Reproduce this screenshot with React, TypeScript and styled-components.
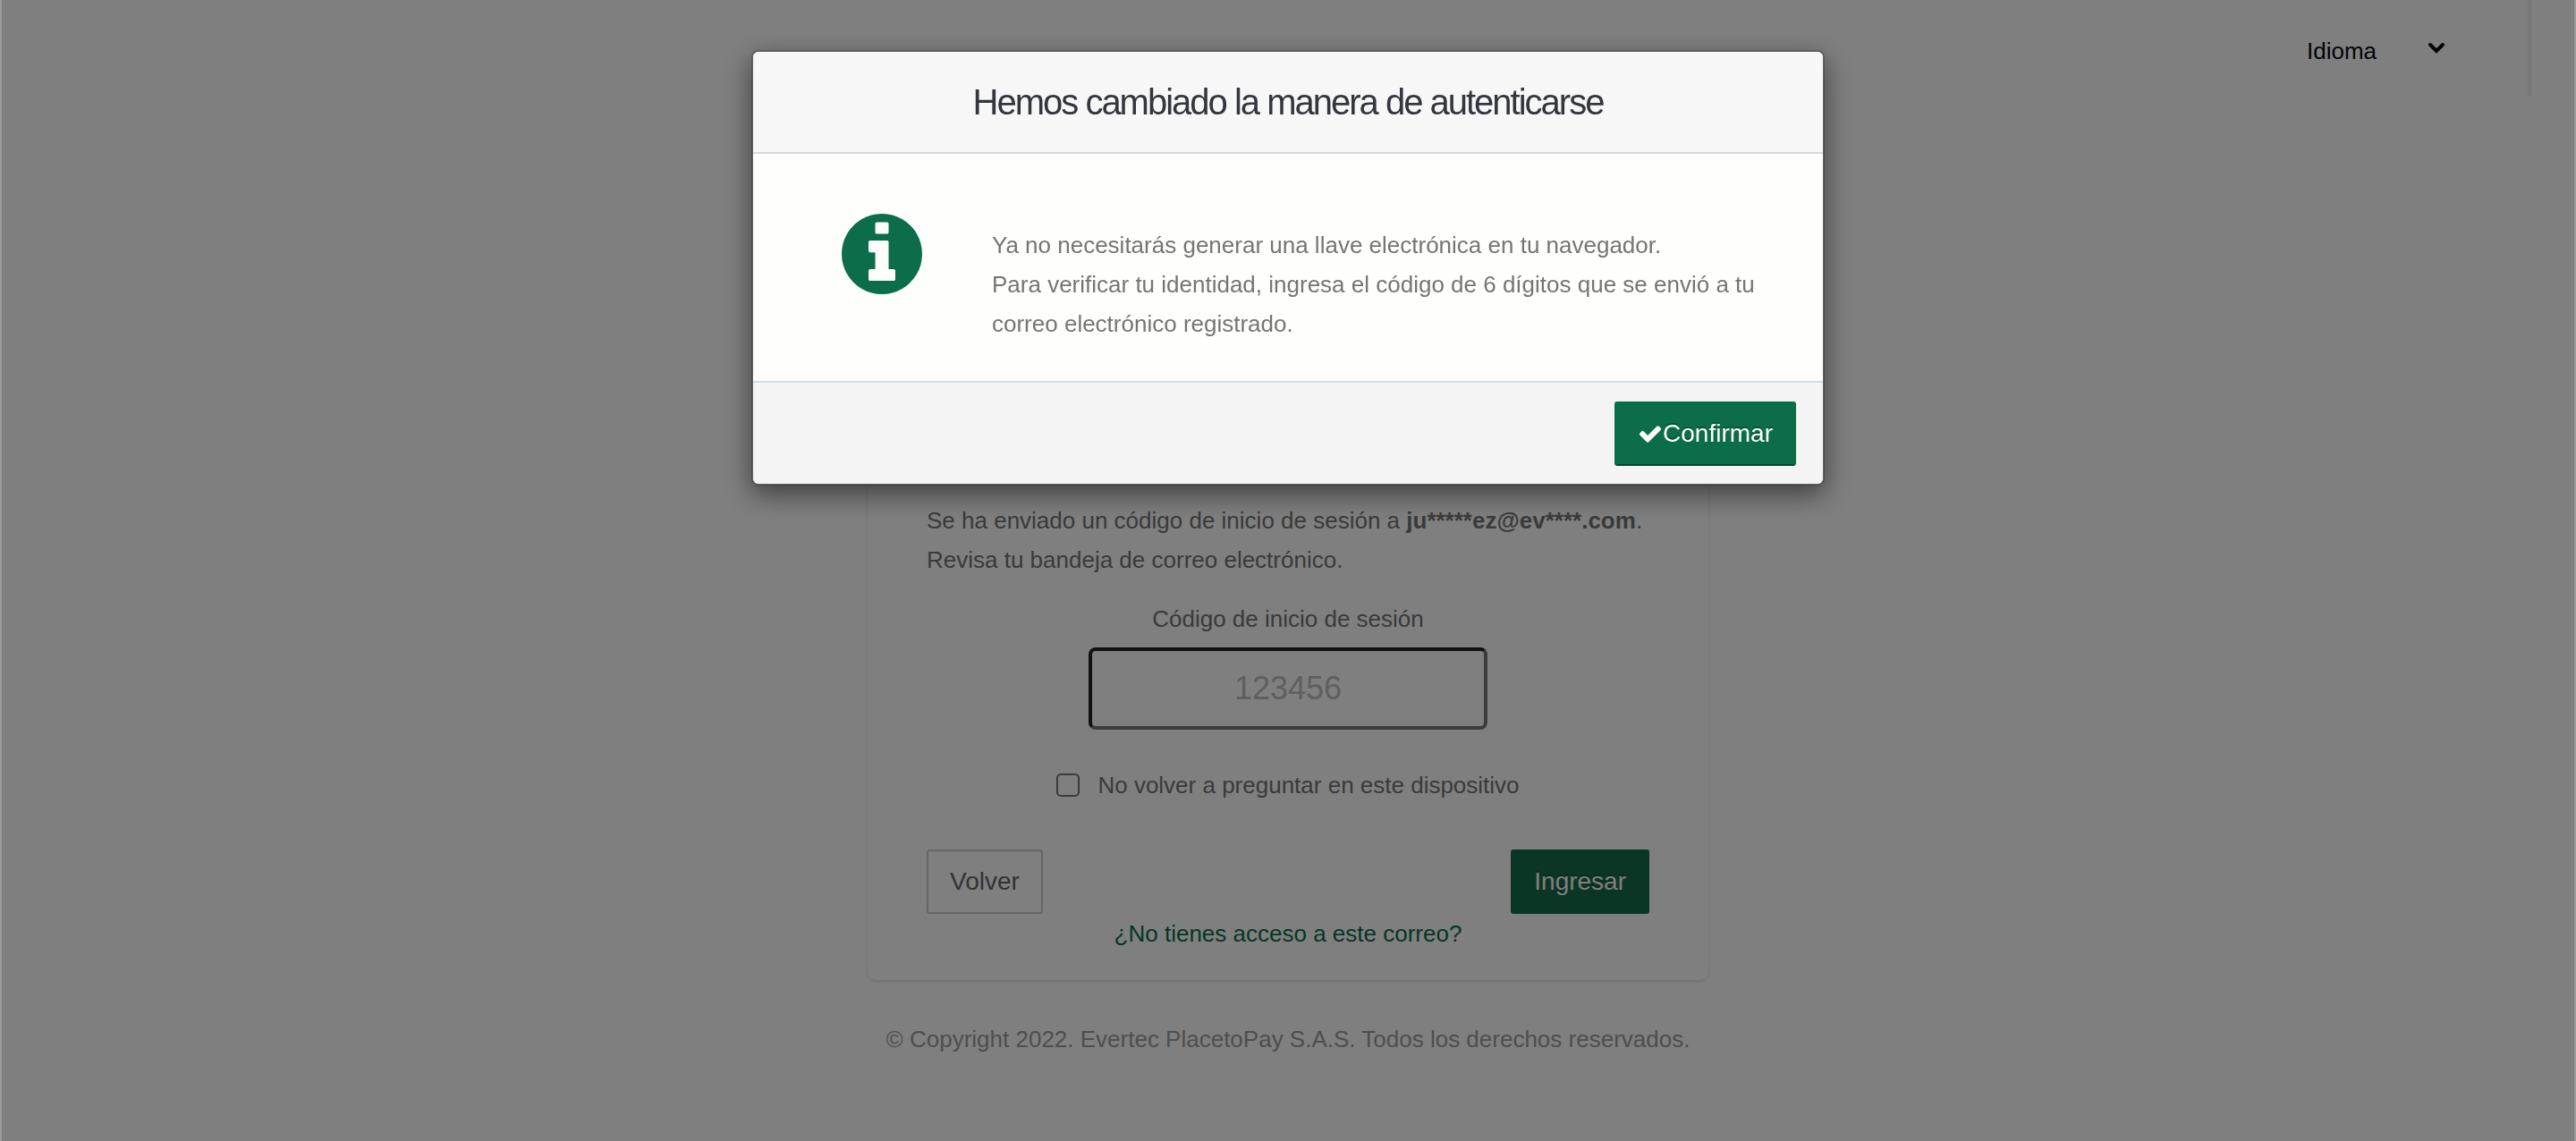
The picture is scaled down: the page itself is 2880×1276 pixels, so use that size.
import React from "react";
import styled, { createGlobalStyle } from "styled-components";

const green = "#0c6d49";
const softGreen = "#166c4b";
const ink = "#757575";

const GlobalStyle = createGlobalStyle`
  *, *::before, *::after { box-sizing: border-box; }
  body {
    margin: 0;
    background: #fff;
    color: ${ink};
    font: 26px/44px "Liberation Sans", Arial, Helvetica, sans-serif;
  }
  p, h1 { margin: 0; }
`;

const Page = styled.div`
  min-height: 100vh;
  display: flex;
  flex-direction: column;
`;

const TopBar = styled.header`
  height: 108px;
  margin-right: 50px;
  padding: 6px 92px 0 50px;
  border-right: 4px solid #f0f0f0;
  display: flex;
  justify-content: flex-end;
  align-items: center;
`;

const LanguagePicker = styled.div`
  display: grid;
  grid-template-columns: 155px;
  align-items: center;
  > * { grid-area: 1 / 1; }
  svg { justify-self: end; pointer-events: none; }
`;

const LanguageSelect = styled.select`
  appearance: none;
  width: 100%;
  height: 44px;
  padding: 0;
  border: 0;
  background: transparent;
  color: #05060f;
  font: inherit;
`;

const Main = styled.main`
  flex: 1;
  display: flex;
  flex-direction: column;
  align-items: center;
  padding: 386px 20px 92px;
`;

const Card = styled.form`
  width: 100%;
  max-width: 940px;
  padding: 66px 66px 30px;
  border-radius: 10px;
  background: #fff;
  box-shadow: 0 2px 4px rgba(0, 0, 0, 0.12);
  display: flex;
  flex-direction: column;
`;

const CodeField = styled.div`
  margin-top: 22px;
  display: flex;
  flex-direction: column;
  align-items: center;
  gap: 10px;
`;

const CodeInput = styled.input`
  width: 446px;
  max-width: 100%;
  height: 92px;
  padding: 0 20px;
  border: 4px solid;
  border-color: #222 #787878 #787878 #222;
  border-radius: 8px;
  background: #fff;
  color: ${ink};
  font: inherit;
  font-size: 36px;
  text-align: center;
  &::placeholder { color: #bfbfbf; opacity: 1; }
`;

const RememberRow = styled.label`
  margin-top: 40px;
  display: flex;
  justify-content: center;
  align-items: center;
  gap: 20px;
`;

const Checkbox = styled.input`
  appearance: none;
  width: 26px;
  height: 26px;
  margin: 0;
  border: 2px solid #767676;
  border-radius: 5px;
  background: #fff;
`;

const Actions = styled.div`
  margin-top: 50px;
  display: flex;
  justify-content: space-between;
`;

const Button = styled.button<{ $kind: "plain" | "primary" }>`
  display: inline-flex;
  align-items: center;
  height: 72px;
  padding: 0 24px;
  border: 2px solid ${(p) => (p.$kind === "primary" ? softGreen : "#ccc")};
  border-radius: 3px;
  background: ${(p) => (p.$kind === "primary" ? softGreen : "#fff")};
  color: ${(p) => (p.$kind === "primary" ? "#fff" : "#62666b")};
  text-shadow: ${(p) => (p.$kind === "primary" ? "0 -2px 0 rgba(0, 0, 0, 0.25)" : "none")};
  font: inherit;
  font-size: 28px;
`;

const ConfirmButton = styled(Button)`
  border-color: ${green} ${green} #04432b;
  background: ${green};
`;

const HelpLink = styled.a`
  align-self: center;
  color: ${green};
  text-decoration: none;
`;

const Copyright = styled.footer`
  margin-top: 44px;
  color: #9c9c9c;
  text-align: center;
`;

const Backdrop = styled.div`
  position: fixed;
  inset: 0;
  padding: 56px 20px;
  border: solid #9a9a9a;
  border-width: 0 2px;
  background: rgba(0, 0, 0, 0.5);
  display: flex;
  justify-content: center;
  align-items: flex-start;
`;

const Dialog = styled.section`
  width: 100%;
  max-width: 1200px;
  border: 2px solid rgba(0, 0, 0, 0.2);
  border-radius: 8px;
  background: #fefefd;
  background-clip: padding-box;
  box-shadow: 0 10px 30px rgba(0, 0, 0, 0.5);
`;

const DialogHeader = styled.header`
  height: 114px;
  border-bottom: 2px solid #d8d8d8;
  border-radius: 6px 6px 0 0;
  background: #f7f7f7;
  display: flex;
  justify-content: center;
  align-items: center;
`;

const DialogTitle = styled.h1`
  color: #33363f;
  font-size: 40px;
  font-weight: 400;
  letter-spacing: -2px;
`;

const DialogBody = styled.div`
  padding: 67px 66px 42px 99px;
  display: flex;
  align-items: flex-start;
  gap: 78px;
  svg { flex: none; }
`;

const Message = styled.div`
  padding-top: 13px;
`;

const DialogFooter = styled.footer`
  height: 115px;
  padding: 0 30px;
  border-top: 2px solid #cfdfea;
  border-radius: 0 0 6px 6px;
  background: #f4f4f4;
  display: flex;
  justify-content: flex-end;
  align-items: center;
`;

const ChevronIcon = () => (
  <svg width="20" height="20" viewBox="0 0 20 20" fill="none" stroke="#05060f" strokeWidth="4" strokeLinecap="round" aria-hidden="true">
    <path d="M3 3l7 7 7-7" />
  </svg>
);

const InfoIcon = () => (
  <svg width="90" height="90" viewBox="128 128 1536 1536" fill={green} aria-hidden="true">
    <path d="M1152 1376v-160q0-14-9-23t-23-9h-96v-512q0-14-9-23t-23-9h-320q-14 0-23 9t-9 23v160q0 14 9 23t23 9h96v320h-96q-14 0-23 9t-9 23v160q0 14 9 23t23 9h448q14 0 23-9t9-23zm-128-896v-160q0-14-9-23t-23-9h-192q-14 0-23 9t-9 23v160q0 14 9 23t23 9h192q14 0 23-9t9-23zm640 416q0 209-103 385.5t-279.5 279.5-385.5 103-385.5-103-279.5-279.5-103-385.5 103-385.5 279.5-279.5 385.5-103 385.5 103 279.5 279.5 103 385.5z" />
  </svg>
);

const CheckIcon = () => (
  <svg width="28" height="28" viewBox="0 0 1792 1792" fill="#fff" aria-hidden="true">
    <path d="M1671 566q0 40-28 68l-724 724-136 136q-28 28-68 28t-68-28l-136-136-362-362q-28-28-28-68t28-68l136-136q28-28 68-28t68 28l294 295 656-657q28-28 68-28t68 28l136 136q28 28 28 68z" />
  </svg>
);

export default function App() {
  return (
    <>
      <GlobalStyle />
      <Page>
        <TopBar>
          <LanguagePicker>
            <LanguageSelect aria-label="Idioma">
              <option>Idioma</option>
            </LanguageSelect>
            <ChevronIcon />
          </LanguagePicker>
        </TopBar>
        <Main>
          <Card>
            <p>
              Se ha enviado un código de inicio de sesión a <strong>ju*****ez@ev****.com</strong>.
              <br />
              Revisa tu bandeja de correo electrónico.
            </p>
            <CodeField>
              <label htmlFor="code">Código de inicio de sesión</label>
              <CodeInput id="code" type="text" inputMode="numeric" placeholder="123456" />
            </CodeField>
            <RememberRow>
              <Checkbox type="checkbox" />
              No volver a preguntar en este dispositivo
            </RememberRow>
            <Actions>
              <Button type="button" $kind="plain">Volver</Button>
              <Button type="submit" $kind="primary">Ingresar</Button>
            </Actions>
            <HelpLink href="#">¿No tienes acceso a este correo?</HelpLink>
          </Card>
          <Copyright>© Copyright 2022. Evertec PlacetoPay S.A.S. Todos los derechos reservados.</Copyright>
        </Main>
      </Page>
      <Backdrop>
        <Dialog role="dialog" aria-modal="true" aria-labelledby="dialog-title">
          <DialogHeader>
            <DialogTitle id="dialog-title">Hemos cambiado la manera de autenticarse</DialogTitle>
          </DialogHeader>
          <DialogBody>
            <InfoIcon />
            <Message>
              <p>Ya no necesitarás generar una llave electrónica en tu navegador.</p>
              <p>
                Para verificar tu identidad, ingresa el código de 6 dígitos que se envió a tu correo electrónico
                registrado.
              </p>
            </Message>
          </DialogBody>
          <DialogFooter>
            <ConfirmButton type="button" $kind="primary">
              <CheckIcon />
              Confirmar
            </ConfirmButton>
          </DialogFooter>
        </Dialog>
      </Backdrop>
    </>
  );
}
